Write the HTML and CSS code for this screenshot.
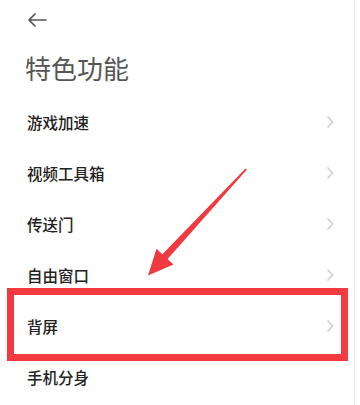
FILE: index.html
```html
<!DOCTYPE html>
<html lang="zh">
<head>
<meta charset="utf-8">
<link rel="stylesheet" href="styles.css">
</head>
<body>
<div class="page">
  <div class="topbar">
    <svg class="back" width="20" height="14" viewBox="0 0 20 14"><path d="M19 7H2M8 1L2 7l6 6" fill="none" stroke="#555" stroke-width="1.7" stroke-linecap="round" stroke-linejoin="round"/></svg>
  </div>
  <h1 class="title">特色功能</h1>
  <ul class="list">
    <li class="row"><span>游戏加速</span><svg class="chev" width="8" height="14" viewBox="0 0 8 14"><path d="M1.5 1.5L6.5 7l-5 5.5" fill="none" stroke="#cfcfcf" stroke-width="1.6"/></svg></li>
    <li class="row"><span>视频工具箱</span><svg class="chev" width="8" height="14" viewBox="0 0 8 14"><path d="M1.5 1.5L6.5 7l-5 5.5" fill="none" stroke="#cfcfcf" stroke-width="1.6"/></svg></li>
    <li class="row"><span>传送门</span><svg class="chev" width="8" height="14" viewBox="0 0 8 14"><path d="M1.5 1.5L6.5 7l-5 5.5" fill="none" stroke="#cfcfcf" stroke-width="1.6"/></svg></li>
    <li class="row"><span>自由窗口</span><svg class="chev" width="8" height="14" viewBox="0 0 8 14"><path d="M1.5 1.5L6.5 7l-5 5.5" fill="none" stroke="#cfcfcf" stroke-width="1.6"/></svg></li>
    <li class="row"><span>背屏</span><svg class="chev" width="8" height="14" viewBox="0 0 8 14"><path d="M1.5 1.5L6.5 7l-5 5.5" fill="none" stroke="#cfcfcf" stroke-width="1.6"/></svg></li>
    <li class="row"><span>手机分身</span></li>
  </ul>
</div>
<div class="highlight"></div>
<svg class="pointer" width="360" height="405" viewBox="0 0 360 405"><polygon points="247,169.5 167.6,259.1 173.5,264.5 148,275.5 156.5,248.8 162.4,254.3 245.5,168.5" fill="#f03a40"/></svg>
</body>
</html>
```
FILE: styles.css
```css
html, body {
  margin: 0;
  padding: 0;
  background: #fff;
}
body {
  width: 360px;
  height: 405px;
  overflow: hidden;
  position: relative;
  font-family: "Noto Sans CJK SC", "Noto Sans", sans-serif;
}
.page {
  width: 355px;
  height: 405px;
  border-right: 1px solid #e6e6e6;
  box-sizing: border-box;
}
.topbar {
  height: 40px;
  display: flex;
  align-items: center;
  padding-left: 27px;
}
.back {
  display: block;
}
.title {
  margin: 0;
  padding-left: 25px;
  font-size: 26px;
  font-weight: 400;
  color: #555;
  line-height: 55px;
  height: 56px;
}
.list {
  list-style: none;
  margin: 0;
  padding: 0;
}
.row {
  height: 51px;
  display: flex;
  align-items: center;
  justify-content: space-between;
  padding: 0 20px 0 27px;
  font-size: 15.5px;
  font-weight: 500;
  color: #222;
}
.chev {
  display: block;
}
.highlight {
  position: absolute;
  left: 7px;
  top: 288px;
  width: 341px;
  height: 73px;
  box-sizing: border-box;
  border: 7px solid #f23a40;
}
.pointer {
  position: absolute;
  left: 0;
  top: 0;
}
```
